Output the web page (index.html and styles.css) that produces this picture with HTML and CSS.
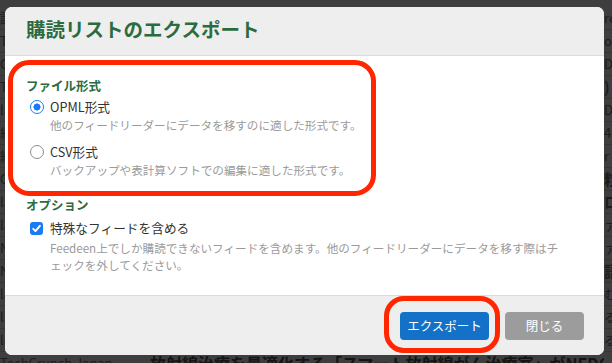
FILE: index.html
```html
<!DOCTYPE html>
<html lang="ja">
<head>
<meta charset="utf-8">
<title>購読リストのエクスポート</title>
<link rel="stylesheet" href="styles.css">
</head>
<body>
<div class="page">
  <div class="page-row"><span class="src">論</span><span class="ttl"></span><span class="end">re</span></div>
  <div class="page-row"><span class="src">T</span><span class="ttl"></span><span class="end">o</span></div>
  <div class="page-row"><span class="src">G</span><span class="ttl"></span><span class="end">D</span></div>
  <div class="page-row"><span class="src">T</span><span class="ttl"></span><span class="end strong">)</span></div>
  <div class="page-row"><span class="src">la</span><span class="ttl"></span><span class="end">D</span></div>
  <div class="page-row"><span class="src">総</span><span class="ttl"></span><span class="end">4</span></div>
  <div class="page-row"><span class="src">総</span><span class="ttl"></span><span class="end">r</span></div>
  <div class="page-row"><span class="src">G</span><span class="ttl"></span><span class="end strong">粒</span></div>
  <div class="page-row"><span class="src">la</span><span class="ttl"></span><span class="end strong">ロ</span></div>
  <div class="page-row"><span class="src">la</span><span class="ttl"></span><span class="end">ァ</span></div>
  <div class="page-row"><span class="src">N</span><span class="ttl"></span><span class="end">ァ</span></div>
  <div class="page-row"><span class="src">N</span><span class="ttl"></span><span class="end strong">語</span></div>
  <div class="page-row"><span class="src">la</span><span class="ttl"></span><span class="end">む</span></div>
  <div class="page-row"><span class="src">la</span><span class="ttl"></span><span class="end">る</span></div>
  <div class="page-row"><span class="src">la</span><span class="ttl"></span><span class="end">る</span></div>
  <div class="page-row"><span class="src">TechCrunch Japan</span><span class="ttl">放射線治療を最適化する「スマート放射線がん治療室」がNEDOの研究開発</span><span class="end"></span></div>
</div>

<div class="modal">
  <div class="modal-header">
    <h1 class="modal-title">購読リストのエクスポート</h1>
  </div>
  <div class="modal-body">
    <h2 class="section-title">ファイル形式</h2>
    <div class="option">
      <span class="radio radio-checked"></span>
      <span class="option-label">OPML形式</span>
    </div>
    <p class="option-desc">他のフィードリーダーにデータを移すのに適した形式です。</p>
    <div class="option option-next">
      <span class="radio"></span>
      <span class="option-label">CSV形式</span>
    </div>
    <p class="option-desc">バックアップや表計算ソフトでの編集に適した形式です。</p>

    <h2 class="section-title section-next">オプション</h2>
    <div class="option option-check">
      <span class="checkbox"><svg viewBox="0 0 13 13" width="13" height="13"><path d="M3.2 6.8 L5.5 9.1 L9.9 3.8" fill="none" stroke="#fff" stroke-width="1.9" stroke-linecap="round" stroke-linejoin="round"/></svg></span>
      <span class="option-label">特殊なフィードを含める</span>
    </div>
    <p class="option-desc option-desc-long">Feedeen上でしか購読できないフィードを含めます。他のフィードリーダーにデータを移す際はチェックを外してください。</p>
  </div>
  <div class="modal-footer">
    <button class="btn btn-primary">エクスポート</button>
    <button class="btn btn-secondary">閉じる</button>
  </div>
</div>

<div class="annot annot-format"></div>
<div class="annot annot-export"></div>
</body>
</html>
```

FILE: styles.css
```css
html, body {
  margin: 0;
  padding: 0;
}

body {
  width: 612px;
  height: 363px;
  overflow: hidden;
  position: relative;
  background: #3e3e3e;
  font-family: "Noto Sans CJK JP", "Noto Sans", sans-serif;
}

/* background page (dimmed) */
.page {
  padding-top: 7px;
}

.page-row {
  display: grid;
  grid-template-columns: 150px 454px 1fr;
  height: 22px;
  border-bottom: 1px solid #353535;
  align-items: center;
  white-space: nowrap;
  overflow: hidden;
  color: #1c1c1c;
}

.src {
  font-size: 13px;
  line-height: 22px;
  overflow: hidden;
}

.ttl {
  font-size: 16px;
  font-weight: 700;
  line-height: 22px;
  color: #141414;
  overflow: hidden;
}

.end {
  font-size: 13px;
  line-height: 22px;
}

.end.strong {
  font-weight: 700;
  font-size: 15px;
}

/* modal */
.modal {
  position: absolute;
  left: 5px;
  top: 7px;
  width: 599px;
  height: 348px;
  background: #ffffff;
  border-radius: 7px;
  overflow: hidden;
  display: flex;
  flex-direction: column;
}

.modal-header {
  height: 49px;
  box-sizing: border-box;
  background: #eeeeee;
  border-bottom: 1px solid #dcdcdc;
  padding: 10px 21px 0;
}

.modal-title {
  margin: 0;
  font-size: 19.5px;
  line-height: 24px;
  font-weight: 700;
  color: #2c6b40;
}

.modal-body {
  height: 239px;
  box-sizing: border-box;
  padding: 21px 21px 0;
}

.section-title {
  margin: 0;
  font-size: 12.5px;
  line-height: 18px;
  font-weight: 700;
  color: #2c6b40;
}

.section-next {
  margin-top: 17px;
}

.option {
  display: flex;
  align-items: center;
  height: 18px;
  margin-top: 3px;
  padding-left: 4px;
  gap: 6px;
}

.option-next {
  margin-top: 9px;
}

.option-check {
  margin-top: 5px;
  gap: 7px;
}

.option-label {
  font-size: 12.7px;
  line-height: 18px;
  color: #333333;
}

.radio {
  width: 14px;
  height: 14px;
  box-sizing: border-box;
  border-radius: 50%;
  border: 1px solid #8c8c8c;
  background: #ffffff;
  flex: none;
}

.radio-checked {
  border: 1.5px solid #1b7cf2;
  background: radial-gradient(circle, #1b7cf2 0 3.3px, #ffffff 3.8px);
}

.checkbox {
  width: 13px;
  height: 13px;
  border-radius: 3px;
  background: #1b7cf2;
  flex: none;
  display: flex;
}

.option-desc {
  margin: 0 0 0 24px;
  font-size: 11.6px;
  line-height: 18px;
  color: #9a9a9a;
}

.option-desc-long {
  margin-top: 3px;
  width: 514px;
  line-height: 17px;
  line-break: normal;
}

.modal-footer {
  flex: 1;
  background: #eeeeee;
  border-top: 1px solid #dcdcdc;
  display: flex;
  justify-content: flex-end;
  align-items: center;
  gap: 16px;
  padding-right: 20px;
}

.btn {
  height: 28px;
  border: none;
  border-radius: 4px;
  font-family: "Noto Sans CJK JP", "Noto Sans", sans-serif;
  font-size: 12.5px;
  color: #ffffff;
  padding: 0;
}

.btn-primary {
  width: 89px;
  background: #1371c8;
}

.btn-secondary {
  width: 79px;
  background: #9c9c9c;
}

/* red annotation outlines drawn over the screenshot */
.annot {
  position: absolute;
  box-sizing: border-box;
  border: 5.5px solid #ff2600;
  border-radius: 21px;
}

.annot-format {
  left: 8px;
  top: 60px;
  width: 368px;
  height: 136px;
}

.annot-export {
  left: 384px;
  top: 296px;
  width: 116px;
  height: 57px;
  border-radius: 20px;
}
```
